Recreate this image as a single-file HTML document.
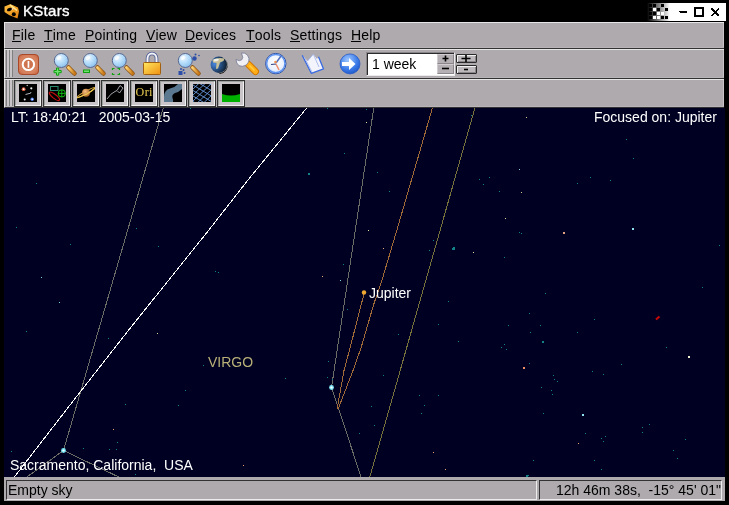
<!DOCTYPE html>
<html><head><meta charset="utf-8"><style>
*{margin:0;padding:0;box-sizing:border-box}
html,body{width:729px;height:505px;overflow:hidden;background:#000}
body{position:relative;font-family:"Liberation Sans",sans-serif;font-size:14px}
.a{position:absolute}
.t{position:absolute;white-space:pre;line-height:16px;will-change:transform}
.bar{position:absolute;left:4px;width:720px;background:#aeaaad;border-top:1px solid #e6e6e6;border-left:1px solid #e6e6e6;border-bottom:1px solid #333;box-shadow:inset 0 -1px 0 #b8b4b7,inset -1px 0 0 #c8c4c7}
.menu span{position:absolute;top:4px;line-height:16px;color:#000;white-space:pre;will-change:transform;letter-spacing:0.2px}
.menu u{text-decoration:none;position:relative}
.menu u:after{content:"";position:absolute;left:0;right:0;bottom:1px;height:1px;background:#000}
.hd{position:absolute;left:0;top:0;width:9px;bottom:1px;background:linear-gradient(90deg,#aeaaad 0,#aeaaad 1px,#7e807e 1px,#7e807e 2px,#c8c4c7 2px,#c8c4c7 4px,#7e807e 4px,#7e807e 5px,#c8c4c7 5px,#c8c4c7 7px,#7e807e 7px,#7e807e 8px,#aeaaad 8px)}
.tb{position:absolute;top:0px;width:28px;height:27px;border:1px solid #333;background:#c9c5c8}
.tb:before{content:"";position:absolute;left:0;top:0;right:0;bottom:0;border-top:1px solid #9ea29e;border-left:1px solid #9ea29e;border-right:1px solid #f2f2f2;border-bottom:1px solid #f2f2f2}
.tb svg{position:absolute;left:4px;top:3px;will-change:transform}
</style></head><body>

<svg class="a" style="left:0;top:0" width="729" height="22">
 <defs>
  <linearGradient id="tg" x1="0" x2="1"><stop offset="0" stop-color="#000"/><stop offset="1" stop-color="#fff"/></linearGradient>
  <linearGradient id="kic" x1="0" y1="0" x2="1" y2="1"><stop offset="0" stop-color="#ffc040"/><stop offset="1" stop-color="#e08010"/></linearGradient>
 </defs>
 <path d="M4.5,6.5 L10,4.3 L12.5,5 L18,7.5 L19,11.5 L17.5,18.5 L9,15 L4.5,12 Z" fill="url(#kic)"/>
 <ellipse cx="9.5" cy="9.5" rx="2.6" ry="1.6" transform="rotate(-20 9.5 9.5)" fill="#000"/>
 <ellipse cx="13.8" cy="14.3" rx="2" ry="2" fill="#000"/>
 <path d="M10,4.8 L17,10.5" stroke="#ffe890" stroke-width="1.6"/><circle cx="12.5" cy="9" r="0.8" fill="#f0e0f0"/>
 <rect x="647" y="3" width="79" height="18" fill="#fff"/>
 <rect x="647" y="3" width="23" height="18" fill="url(#tg)"/>
 <g fill="#000" shape-rendering="crispEdges">
  <rect x="649" y="4" width="3" height="3"/><rect x="653" y="4" width="3" height="3"/><rect x="661" y="4" width="3" height="3"/>
  <rect x="649" y="8" width="3" height="3"/><rect x="657" y="8" width="3" height="3"/><rect x="665" y="8" width="3" height="3"/>
  <rect x="649" y="12" width="3" height="3"/><rect x="653" y="12" width="3" height="3"/>
  <rect x="649" y="16" width="3" height="3"/><rect x="661" y="16" width="3" height="3"/><rect x="665" y="16" width="3" height="3"/>
 </g>
 <g fill="#fff" shape-rendering="crispEdges">
  <rect x="653" y="8" width="3" height="3"/><rect x="657" y="12" width="3" height="3"/><rect x="661" y="12" width="3" height="3"/>
  <rect x="653" y="16" width="3" height="3"/><rect x="657" y="16" width="3" height="3"/>
 </g>
 <g shape-rendering="crispEdges" fill="#000">
  <rect x="680" y="11" width="7" height="2"/><rect x="679" y="11" width="1" height="1"/>
  <rect x="694" y="7" width="10" height="2"/><rect x="694" y="7" width="2" height="10"/><rect x="702" y="7" width="2" height="10"/><rect x="694" y="15" width="10" height="2"/>
 </g>
 <path d="M711.5,8.5 L719,16 M719,8.5 L711.5,16" stroke="#000" stroke-width="2" shape-rendering="crispEdges"/>
</svg>
<div class="t" style="left:23px;top:3px;color:#fff;font-size:15px;letter-spacing:0.3px;-webkit-text-stroke:0.35px #fff">KStars</div>

<div class="bar menu" style="top:22px;height:27px">
<span style="left:6.5px"><u>F</u>ile</span>
<span style="left:39px"><u>T</u>ime</span>
<span style="left:79.5px"><u>P</u>ointing</span>
<span style="left:141px"><u>V</u>iew</span>
<span style="left:180px"><u>D</u>evices</span>
<span style="left:241px"><u>T</u>ools</span>
<span style="left:285px"><u>S</u>ettings</span>
<span style="left:346px"><u>H</u>elp</span>
</div>

<div class="bar" style="top:49px;height:30px"><div class="hd"></div>
 <div class="a" style="left:361px;top:2px;width:89px;height:24px;border-top:1px solid #8a868a;border-left:1px solid #8a868a;border-right:1px solid #ececec;border-bottom:1px solid #ececec">
  <div class="a" style="left:0;top:0;width:87px;height:22px;border-top:1px solid #2a2a2a;border-left:1px solid #2a2a2a;background:#fff"></div>
  <div class="t" style="left:5px;top:3px;color:#000">1 week</div>
  <div class="a" style="left:70px;top:1px;width:17px;height:10px;background:#b4b0b3;border-top:1px solid #d0ccd0;border-left:1px solid #d0ccd0;border-bottom:1px solid #8a868a;border-right:1px solid #8a868a"></div>
  <div class="a" style="left:70px;top:11px;width:17px;height:10px;background:#b4b0b3;border-top:1px solid #d0ccd0;border-left:1px solid #d0ccd0;border-bottom:1px solid #8a868a;border-right:1px solid #8a868a"></div>
 </div>
 <div class="a" style="left:451px;top:4px;width:21px;height:9px;border:1px solid #2a2a2a;border-radius:1px;background:#bcb8bb;box-shadow:inset 1px 1px 0 #f0f0f0,inset -1px -1px 0 #8a868a"></div>
 <div class="a" style="left:451px;top:15px;width:21px;height:9px;border:1px solid #2a2a2a;border-radius:1px;background:#bcb8bb;box-shadow:inset 1px 1px 0 #f0f0f0,inset -1px -1px 0 #8a868a"></div>
</div>
<div class="bar" style="top:79px;height:29px"><div class="hd"></div><div class="tb" style="left:9px"><svg width="18" height="18" viewBox="0 0 18 18"><rect width="18" height="18" fill="#000"/><circle cx="4.6" cy="5.2" r="1.9" fill="#e06040"/><circle cx="4.6" cy="5.2" r="0.9" fill="#fff"/><circle cx="8.2" cy="1.5" r="0.7" fill="#ccc"/><circle cx="12.3" cy="4.3" r="1.1" fill="#eee"/><path d="M6.5,10.5 L9,9.8 L11.5,9.3 L12,8" stroke="#c8c8d0" stroke-width="0.9" fill="none"/><circle cx="5.7" cy="15.4" r="1" fill="#e8e8f0"/><circle cx="13.2" cy="15.2" r="1.7" fill="#5080f0"/><circle cx="13.2" cy="15.2" r="0.8" fill="#fff"/></svg></div><div class="tb" style="left:38px"><svg width="18" height="18" viewBox="0 0 18 18"><rect width="18" height="18" fill="#000"/><rect x="2.5" y="2.5" width="7.5" height="4" fill="none" stroke="#2a8a70"/><ellipse cx="6.4" cy="12.3" rx="6.3" ry="2" transform="rotate(38 6.4 12.3)" fill="none" stroke="#c01010" stroke-width="1.2"/><circle cx="13.8" cy="9.4" r="3.6" fill="none" stroke="#10c010" stroke-width="1"/><path d="M13.8,5.8 v7.2 M10.2,9.4 h7.2" stroke="#10c010" stroke-width="0.9"/></svg></div><div class="tb" style="left:67px"><svg width="18" height="18" viewBox="0 0 18 18"><defs><radialGradient id="sat" cx="0.4" cy="0.35" r="0.7"><stop offset="0" stop-color="#f8c080"/><stop offset="1" stop-color="#a05a20"/></radialGradient></defs><rect width="18" height="18" fill="#000"/><ellipse cx="9" cy="8.6" rx="10.5" ry="1.3" transform="rotate(-28 9 8.6)" fill="none" stroke="#d8a838" stroke-width="1.1"/><circle cx="9" cy="8.8" r="4" fill="url(#sat)"/><path d="M0,13.8 Q6,11.5 9.5,10.3 Q14,8 18,4" stroke="#f0c850" stroke-width="1.2" fill="none"/></svg></div><div class="tb" style="left:96px"><svg width="18" height="18" viewBox="0 0 18 18"><rect width="18" height="18" fill="#000"/><path d="M1,15 Q5,9 9,7.5 L11,6.5 L14,1.5 L17,4 L13.5,9 L11.5,7" stroke="#c8c8d0" stroke-width="0.8" fill="none"/></svg></div><div class="tb" style="left:125px"><svg width="18" height="18" viewBox="0 0 18 18"><rect width="18" height="18" fill="#000"/><text x="0.6" y="11.6" font-family="Liberation Serif" font-size="12" fill="#dcc04c" stroke="#dcc04c" stroke-width="0.12" letter-spacing="0.4">Ori</text></svg></div><div class="tb" style="left:154px"><svg width="18" height="18" viewBox="0 0 18 18"><rect width="18" height="18" fill="#000"/><path d="M0,18 L0,13 Q0,6 6,4.5 Q11,3.5 14,0 L18,0 L18,5 Q15,8 11,9 Q7.5,10.5 8.5,14 Q9.5,16 9,18 Z" fill="#5a7890"/></svg></div><div class="tb" style="left:183px"><svg width="18" height="18" viewBox="0 0 18 18"><rect width="18" height="18" fill="#000"/><g stroke="#6a9ae0" stroke-width="0.9" fill="none"><path d="M0,-10 L18,0.8 M0,-4.5 L18,6.3 M0,1 L18,11.8 M0,6.5 L18,17.3 M0,12 L18,22.8 M0,17.5 L18,28.3 M0,5 L18,-12.1 M0,11 L18,-6.1 M0,17 L18,-0.1 M0,23 L18,5.9 M0,29 L18,11.9"/></g></svg></div><div class="tb" style="left:212px"><svg width="18" height="18" viewBox="0 0 18 18"><rect width="18" height="18" fill="#000"/><path d="M0,10 Q9,13 18,10 L18,18 L0,18 Z" fill="#00b000"/></svg></div></div>
<svg class="a" style="left:0;top:0" width="729" height="80">
 <defs>
  <radialGradient id="pw" cx="0.5" cy="0.5" r="0.7"><stop offset="0" stop-color="#c86a44"/><stop offset="0.6" stop-color="#d88460"/><stop offset="1" stop-color="#c86040"/></radialGradient>
  <radialGradient id="gl" cx="0.35" cy="0.3" r="0.8"><stop offset="0" stop-color="#eef8ff"/><stop offset="0.5" stop-color="#b4dcfa"/><stop offset="1" stop-color="#84bcec"/></radialGradient>
  <linearGradient id="hd" x1="0" y1="0" x2="1" y2="0"><stop offset="0" stop-color="#ffd070"/><stop offset="1" stop-color="#c87818"/></linearGradient>
  <linearGradient id="lk" x1="0" y1="0" x2="1" y2="1"><stop offset="0" stop-color="#ffe860"/><stop offset="1" stop-color="#f09010"/></linearGradient>
  <radialGradient id="gb" cx="0.25" cy="0.45" r="0.85"><stop offset="0" stop-color="#4a88e0"/><stop offset="0.5" stop-color="#244a7a"/><stop offset="1" stop-color="#081018"/></radialGradient>
  <radialGradient id="ar" cx="0.4" cy="0.3" r="0.8"><stop offset="0" stop-color="#a0c8ff"/><stop offset="0.6" stop-color="#3a7ae8"/><stop offset="1" stop-color="#1a50c0"/></radialGradient>
  <radialGradient id="ck" cx="0.5" cy="0.4" r="0.6"><stop offset="0" stop-color="#ffffff"/><stop offset="0.7" stop-color="#e8f0ff"/><stop offset="1" stop-color="#b0c8f0"/></radialGradient>
 </defs>
 <!-- power -->
 <rect x="18.5" y="54.5" width="20" height="20" rx="3.5" fill="url(#pw)" stroke="#a84a2a"/>
 <circle cx="28.4" cy="64.4" r="5.7" fill="none" stroke="#fff" stroke-width="2"/>
 <rect x="27.6" y="61" width="1.7" height="6.8" fill="#fff"/>
 <!-- zoom in -->
 <g>
  <line x1="68.5" y1="67.5" x2="74.5" y2="73.5" stroke="#8a5010" stroke-width="4.5" stroke-linecap="round"/>
  <line x1="68.5" y1="67.5" x2="74.5" y2="73.5" stroke="url(#hd)" stroke-width="3" stroke-linecap="round"/>
  <circle cx="61.3" cy="60.5" r="7" fill="url(#gl)" stroke="#5a6890" stroke-width="1"/><ellipse cx="59" cy="58" rx="2.5" ry="1.6" transform="rotate(-30 59 58)" fill="#fff" opacity="0.75"/>
 </g>
 <path d="M56.5,68 h2.2 v2.5 h2.5 v2.2 h-2.5 v2.5 h-2.2 v-2.5 h-2.5 v-2.2 h2.5 z" fill="#70e070" stroke="#10a010" stroke-width="1"/>
 <g transform="translate(29 0)">
  <line x1="68.5" y1="67.5" x2="74.5" y2="73.5" stroke="#8a5010" stroke-width="4.5" stroke-linecap="round"/>
  <line x1="68.5" y1="67.5" x2="74.5" y2="73.5" stroke="url(#hd)" stroke-width="3" stroke-linecap="round"/>
  <circle cx="61.3" cy="60.5" r="7" fill="url(#gl)" stroke="#5a6890" stroke-width="1"/><ellipse cx="59" cy="58" rx="2.5" ry="1.6" transform="rotate(-30 59 58)" fill="#fff" opacity="0.75"/>
</g>
 <rect x="83.5" y="70" width="6" height="2.5" fill="#70e070" stroke="#10a010" stroke-width="1"/>
 <g transform="translate(58 0)">
  <line x1="68.5" y1="67.5" x2="74.5" y2="73.5" stroke="#8a5010" stroke-width="4.5" stroke-linecap="round"/>
  <line x1="68.5" y1="67.5" x2="74.5" y2="73.5" stroke="url(#hd)" stroke-width="3" stroke-linecap="round"/>
  <circle cx="61.3" cy="60.5" r="7" fill="url(#gl)" stroke="#5a6890" stroke-width="1"/><ellipse cx="59" cy="58" rx="2.5" ry="1.6" transform="rotate(-30 59 58)" fill="#fff" opacity="0.75"/>
</g>
 <path d="M112.5,70 v-1.5 h2 M117.5,68.5 h2 v1.5 M119.5,73 v1.5 h-2 M114.5,74.5 h-2 v-1.5" fill="none" stroke="#10a010" stroke-width="1.2"/>
 <!-- lock -->
 <path d="M147.5,63 V58.5 A4.5,5 0 0 1 156.5,58.5 V63" fill="none" stroke="#4a5a90" stroke-width="3.6"/>
 <path d="M147.5,63 V58.5 A4.5,5 0 0 1 156.5,58.5 V63" fill="none" stroke="#f4f4f8" stroke-width="2"/>
 <rect x="143.5" y="62.5" width="17" height="12" rx="1" fill="url(#lk)" stroke="#a06010"/>
 <!-- find -->
 <g transform="translate(124 0)">
  <line x1="68.5" y1="67.5" x2="74.5" y2="73.5" stroke="#8a5010" stroke-width="4.5" stroke-linecap="round"/>
  <line x1="68.5" y1="67.5" x2="74.5" y2="73.5" stroke="url(#hd)" stroke-width="3" stroke-linecap="round"/>
  <circle cx="61.3" cy="60.5" r="7" fill="url(#gl)" stroke="#5a6890" stroke-width="1"/><ellipse cx="59" cy="58" rx="2.5" ry="1.6" transform="rotate(-30 59 58)" fill="#fff" opacity="0.75"/>
</g>
 <circle cx="194.5" cy="58.5" r="2.2" fill="#2c4ea8"/><circle cx="195.5" cy="54.5" r="1" fill="#2c4ea8"/><circle cx="199" cy="55.5" r="0.8" fill="#2c4ea8"/>
 <rect x="178.5" y="71" width="4" height="4" fill="#2c4ea8"/><circle cx="181" cy="69" r="1" fill="#2c4ea8"/><circle cx="183.5" cy="70" r="1" fill="#2c4ea8"/><circle cx="184.5" cy="73" r="1" fill="#2c4ea8"/>
 <!-- globe -->
 <circle cx="218.8" cy="64.7" r="8.2" fill="url(#gb)"/>
 <path d="M212.5,60 Q217,57.2 224.5,58.5 L223.5,61 L220,62.5 L218,68.5 L216,69 L216.5,63 L213,62.5 Z" fill="#c8c098"/>
 <path d="M213.5,59.5 Q216,58.5 219,59 L218,61 L214,61.5 Z" fill="#f0f0e8"/>
 <path d="M225,59 A8.2,8.2 0 0 1 219,72.9 L220,74 A9,9 0 0 0 227.5,63 Z" fill="#000" opacity="0.9"/>
 <!-- wrench -->
 <line x1="248.5" y1="64.5" x2="255.5" y2="71.5" stroke="#d07800" stroke-width="7" stroke-linecap="round"/>
 <line x1="248.5" y1="64.5" x2="255.5" y2="71.5" stroke="#ffae18" stroke-width="5" stroke-linecap="round"/>
 <line x1="250" y1="66" x2="254" y2="70" stroke="#ffd040" stroke-width="1.5" stroke-linecap="round"/>
 <path d="M241.5,53 L244.8,53.2 L247.5,55.2 L249,58.5 L248.6,62 L246.3,65 L242.5,66.3 L239,65.7 L236.8,63 L236,59.5 L239.3,60.7 L241.8,59.8 L242.8,57.5 Z" fill="#f0f0f4" stroke="#6a7090" stroke-width="0.7"/>
 <!-- clock -->
 <circle cx="275.8" cy="63.6" r="10.2" fill="url(#ck)" stroke="#2a50a8" stroke-width="1"/><circle cx="275.8" cy="63.6" r="9.1" fill="none" stroke="#5a90f0" stroke-width="1.3"/>
 <path d="M276,63 L281,56" stroke="#5070c0" stroke-width="1.5"/>
 <path d="M276,64 L279,70" stroke="#f09070" stroke-width="1.5"/>
 <path d="M276,64 L271,64.5" stroke="#304080" stroke-width="1.2"/>
 <circle cx="275.5" cy="62" r="1.3" fill="#f09050"/>
 <!-- book -->
 <path d="M302.2,55.3 L307.5,61 L313.3,54.2 L317,59 L318.5,56.7 L323.5,68.9 L311.3,73.3 Z" fill="#f4f4fc"/>
 <path d="M302.2,55.3 L311.3,73.3 L323.5,68.9 L318.5,56.7" fill="none" stroke="#3a6ae0" stroke-width="1.3" stroke-linejoin="round"/>
 <path d="M304.5,57.5 L312,72 M307.5,61 L313.3,54.2 L319,67" fill="none" stroke="#9ab0e8" stroke-width="0.8"/>
 <!-- arrow -->
 <circle cx="350" cy="63.9" r="10" fill="url(#ar)" stroke="#2a5ac8" stroke-width="0.8"/>
 <path d="M342,62 h7 v-4 l6.5,6 l-6.5,6 v-4 h-7 z" fill="#fff"/>
 <!-- spin +/- -->
 <path d="M445.5,55.5 v6 M442.5,58.5 h6" stroke="#000" stroke-width="1.6"/>
 <path d="M442,68.5 h7" stroke="#000" stroke-width="1.6"/>
 <path d="M466,55 v7 M461.5,58.5 h9" stroke="#000" stroke-width="1.6"/>
 <path d="M464,69.5 h4" stroke="#000" stroke-width="1.6"/>
</svg>

<div class="a" style="left:4px;top:108px;width:721px;height:369px;background:#000022;overflow:hidden">
<svg class="a" style="left:-4px;top:-108px" width="729" height="505">
<g fill="none" stroke-width="1" shape-rendering="crispEdges">
 <path d="M163.5,107 L63.5,450.5 M63.5,450.5 L20,482 M63.5,450.5 L125,480" stroke="#6c6c66"/>
 <path d="M373.9,107 L331.5,387.5 L344,425 L362,480" stroke="#6c6c66"/>
 <path d="M475.5,106 L369,480" stroke="#77713c"/>
 <path d="M433,106 L397.8,227 L382,280 L373.5,305 L361.3,347 L353.2,370 L338.3,408.6 L337.5,409.5" stroke="#a06a38"/>
 <path d="M364.2,293 L350.3,347 L344.1,370 L337,409.5" stroke="#a06a38"/>
 <path d="M308.3,106 L307.5,107 L248,180 L208.9,230 L128.7,330 L73.9,400 L14.4,477 L11,481" stroke="#ffffff"/>
</g>
<rect x="36" y="183" width="1" height="1" fill="#137f86"/>
<rect x="344" y="153" width="1" height="1" fill="#137f86"/>
<rect x="308" y="173" width="2" height="2" fill="#137f86"/>
<rect x="366" y="122" width="1" height="1" fill="#e8e0a0"/>
<rect x="327" y="108" width="1" height="1" fill="#137f86"/>
<rect x="366" y="109" width="1" height="1" fill="#137f86"/>
<rect x="377" y="172" width="1" height="1" fill="#137f86"/>
<rect x="389" y="191" width="1" height="1" fill="#137f86"/>
<rect x="471" y="115" width="1" height="1" fill="#137f86"/>
<rect x="479" y="179" width="1" height="1" fill="#137f86"/>
<rect x="483" y="184" width="1" height="1" fill="#137f86"/>
<rect x="526" y="117" width="1" height="1" fill="#d8c890"/>
<rect x="626" y="139" width="1" height="1" fill="#137f86"/>
<rect x="633" y="158" width="1" height="1" fill="#137f86"/>
<rect x="519" y="169" width="1" height="1" fill="#90d0e0"/>
<rect x="489" y="177" width="1" height="1" fill="#137f86"/>
<rect x="590" y="177" width="1" height="1" fill="#137f86"/>
<rect x="610" y="180" width="1" height="1" fill="#137f86"/>
<rect x="577" y="183" width="1" height="1" fill="#137f86"/>
<rect x="499" y="191" width="1" height="1" fill="#137f86"/>
<rect x="521" y="192" width="1" height="1" fill="#d8c890"/>
<rect x="505" y="218" width="1" height="1" fill="#e0d0a0"/>
<rect x="519" y="232" width="1" height="1" fill="#137f86"/>
<rect x="521" y="233" width="1" height="1" fill="#137f86"/>
<rect x="563" y="232" width="2" height="2" fill="#e0a080"/>
<rect x="632" y="228" width="2" height="2" fill="#90e0f0"/>
<rect x="719" y="245" width="1" height="1" fill="#137f86"/>
<rect x="504" y="257" width="1" height="1" fill="#137f86"/>
<rect x="545" y="293" width="1" height="1" fill="#137f86"/>
<rect x="702" y="287" width="1" height="1" fill="#137f86"/>
<rect x="529" y="313" width="1" height="1" fill="#137f86"/>
<rect x="594" y="319" width="1" height="1" fill="#137f86"/>
<rect x="508" y="325" width="1" height="1" fill="#137f86"/>
<rect x="540" y="325" width="1" height="1" fill="#137f86"/>
<rect x="530" y="332" width="1" height="1" fill="#137f86"/>
<rect x="577" y="332" width="1" height="1" fill="#137f86"/>
<rect x="542" y="341" width="2" height="2" fill="#137f86"/>
<rect x="504" y="344" width="1" height="1" fill="#137f86"/>
<rect x="501" y="347" width="1" height="1" fill="#137f86"/>
<rect x="506" y="349" width="1" height="1" fill="#137f86"/>
<rect x="666" y="347" width="1" height="1" fill="#137f86"/>
<rect x="688" y="356" width="2" height="2" fill="#f0f0d0"/>
<rect x="523" y="367" width="2" height="2" fill="#f09060"/>
<rect x="529" y="363" width="1" height="1" fill="#137f86"/>
<rect x="621" y="364" width="1" height="1" fill="#137f86"/>
<rect x="592" y="371" width="1" height="1" fill="#137f86"/>
<rect x="603" y="374" width="1" height="1" fill="#137f86"/>
<rect x="553" y="375" width="1" height="1" fill="#137f86"/>
<rect x="554" y="379" width="1" height="1" fill="#137f86"/>
<rect x="557" y="381" width="1" height="1" fill="#137f86"/>
<rect x="541" y="387" width="1" height="1" fill="#137f86"/>
<rect x="551" y="390" width="1" height="1" fill="#137f86"/>
<rect x="552" y="394" width="1" height="1" fill="#137f86"/>
<rect x="543" y="413" width="1" height="1" fill="#137f86"/>
<rect x="582" y="414" width="2" height="2" fill="#90e0f0"/>
<rect x="585" y="433" width="1" height="1" fill="#137f86"/>
<rect x="578" y="443" width="1" height="1" fill="#e0a070"/>
<rect x="601" y="438" width="1" height="1" fill="#137f86"/>
<rect x="605" y="436" width="1" height="1" fill="#137f86"/>
<rect x="603" y="441" width="1" height="1" fill="#137f86"/>
<rect x="642" y="427" width="1" height="1" fill="#137f86"/>
<rect x="649" y="424" width="1" height="1" fill="#137f86"/>
<rect x="642" y="432" width="1" height="1" fill="#137f86"/>
<rect x="685" y="439" width="1" height="1" fill="#137f86"/>
<rect x="673" y="450" width="1" height="1" fill="#137f86"/>
<rect x="677" y="458" width="1" height="1" fill="#137f86"/>
<rect x="533" y="460" width="1" height="1" fill="#137f86"/>
<rect x="594" y="460" width="1" height="1" fill="#137f86"/>
<rect x="601" y="469" width="1" height="1" fill="#137f86"/>
<rect x="526" y="475" width="2" height="2" fill="#137f86"/>
<rect x="368" y="230" width="1" height="1" fill="#e8e0a0"/>
<rect x="383" y="248" width="1" height="1" fill="#e0b080"/>
<rect x="433" y="240" width="1" height="1" fill="#137f86"/>
<rect x="429" y="250" width="1" height="1" fill="#137f86"/>
<rect x="452" y="248" width="3" height="2" fill="#137f86"/><rect x="453" y="247" width="2" height="1" fill="#137f86"/>
<rect x="473" y="252" width="1" height="1" fill="#e8d8b0"/>
<rect x="343" y="264" width="1" height="1" fill="#137f86"/>
<rect x="322" y="276" width="1" height="1" fill="#e0b080"/>
<rect x="340" y="280" width="1" height="1" fill="#80d0e0"/>
<rect x="347" y="309" width="1" height="1" fill="#137f86"/>
<rect x="448" y="301" width="1" height="1" fill="#137f86"/>
<rect x="438" y="324" width="1" height="1" fill="#137f86"/>
<rect x="398" y="334" width="1" height="1" fill="#137f86"/>
<rect x="458" y="341" width="1" height="1" fill="#137f86"/>
<rect x="328" y="361" width="1" height="1" fill="#137f86"/>
<rect x="327" y="377" width="1" height="1" fill="#137f86"/>
<rect x="332" y="379" width="1" height="1" fill="#137f86"/>
<rect x="383" y="375" width="1" height="1" fill="#137f86"/>
<rect x="371" y="406" width="1" height="1" fill="#137f86"/>
<rect x="374" y="425" width="1" height="1" fill="#137f86"/>
<rect x="359" y="433" width="1" height="1" fill="#137f86"/>
<rect x="419" y="395" width="1" height="1" fill="#137f86"/>
<rect x="438" y="395" width="1" height="1" fill="#137f86"/>
<rect x="424" y="405" width="1" height="1" fill="#137f86"/>
<rect x="421" y="413" width="1" height="1" fill="#137f86"/>
<rect x="433" y="452" width="1" height="1" fill="#e0a070"/>
<rect x="445" y="469" width="1" height="1" fill="#e0a070"/>
<rect x="16" y="227" width="1" height="1" fill="#137f86"/>
<rect x="70" y="244" width="1" height="1" fill="#137f86"/>
<rect x="136" y="228" width="1" height="1" fill="#137f86"/>
<rect x="158" y="246" width="1" height="1" fill="#137f86"/>
<rect x="41" y="277" width="1" height="1" fill="#80d0e0"/>
<rect x="59" y="302" width="1" height="1" fill="#80d0e0"/>
<rect x="26" y="331" width="1" height="1" fill="#137f86"/>
<rect x="108" y="338" width="1" height="1" fill="#137f86"/>
<rect x="157" y="333" width="1" height="1" fill="#d8d090"/>
<rect x="215" y="271" width="1" height="1" fill="#137f86"/>
<rect x="218" y="272" width="1" height="1" fill="#137f86"/>
<rect x="125" y="404" width="1" height="1" fill="#137f86"/>
<rect x="178" y="405" width="1" height="1" fill="#137f86"/>
<rect x="113" y="429" width="1" height="1" fill="#e0a070"/>
<rect x="117" y="442" width="1" height="1" fill="#137f86"/>
<rect x="116" y="449" width="1" height="1" fill="#137f86"/>
<rect x="109" y="449" width="1" height="1" fill="#137f86"/>
<rect x="83" y="448" width="1" height="1" fill="#137f86"/>
<rect x="11" y="451" width="1" height="1" fill="#137f86"/>
<rect x="135" y="474" width="1" height="1" fill="#137f86"/>
<rect x="203" y="365" width="1" height="1" fill="#137f86"/>
<rect x="285" y="378" width="1" height="1" fill="#137f86"/>
<rect x="185" y="390" width="1" height="1" fill="#137f86"/>
<rect x="243" y="465" width="1" height="1" fill="#e0a070"/>
<rect x="190" y="108" width="1" height="1" fill="#137f86"/>
<rect x="527" y="475" width="2" height="1" fill="#137f86"/>

<circle cx="63.5" cy="450.5" r="2.4" fill="#70e4f4"/><circle cx="63.5" cy="450.5" r="1.1" fill="#fff"/>
<circle cx="331.5" cy="387.5" r="2.4" fill="#80e8f8"/><circle cx="331.5" cy="387.5" r="1.1" fill="#fff"/>
<circle cx="364" cy="292.5" r="2.2" fill="#f0a830"/>
<path d="M656,319.5 L659.5,316.5" stroke="#c80808" stroke-width="2.2"/>
</svg>
</div>
<div class="t" style="left:11px;top:109px;color:#fff">LT: 18:40:21   2005-03-15</div>
<div class="t" style="left:594px;top:109px;color:#fff">Focused on: Jupiter</div>
<div class="t" style="left:369px;top:285px;color:#fff">Jupiter</div>
<div class="t" style="left:208px;top:354px;color:#b8b078">VIRGO</div>
<div class="t" style="left:10px;top:457px;color:#fff">Sacramento, California,  USA</div>

<div class="a" style="left:4px;top:477px;width:721px;height:24px;background:#aeaaad">
 <div class="a" style="left:2px;top:3px;width:531px;height:20px;border-top:1px solid #333;border-left:1px solid #333;border-right:1px solid #ececec;border-bottom:1px solid #ececec"></div>
 <div class="a" style="left:535px;top:3px;width:183px;height:20px;border-top:1px solid #333;border-left:1px solid #333;border-right:1px solid #ececec;border-bottom:1px solid #ececec"></div>
 <div class="t" style="left:4px;top:5px;color:#000">Empty sky</div>
 <div class="t" style="right:4px;top:5px;color:#000">12h 46m 38s,  -15° 45' 01"</div>
</div>

</body></html>
